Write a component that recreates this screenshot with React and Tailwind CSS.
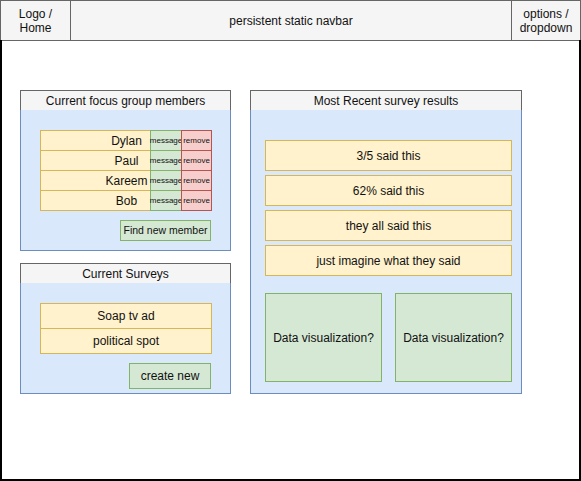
import React from 'react';

const MEMBERS = ['Dylan', 'Paul', 'Kareem', 'Bob'];
const SURVEYS = ['Soap tv ad', 'political spot'];
const RESULTS = ['3/5 said this', '62% said this', 'they all said this', 'just imagine what they said'];

function PanelHeader({ title }) {
    return (
        <div className="h-[21px] border border-[#666666] bg-[#f5f5f5] flex items-center justify-center text-[12px] leading-none">
            {title}
        </div>
    );
}

function Navbar() {
    return (
        <div className="flex h-[41px] border border-[#666666] bg-[#f5f5f5] text-[12px] leading-[14px] text-[#111]">
            <div className="w-[70px] flex items-center justify-center text-center border-r border-[#666666]">
                Logo /<br />Home
            </div>
            <div className="flex-1 flex items-center justify-center">persistent static navbar</div>
            <div className="w-[69px] flex items-center justify-center text-center border-l border-[#666666]">
                options /<br />dropdown
            </div>
        </div>
    );
}

function MembersPanel() {
    return (
        <div className="w-[211px]">
            <PanelHeader title="Current focus group members" />
            <div className="h-[141px] -mt-px border-x border-b border-[#6c8ebf] bg-[#dae8fc] pl-[19px] pt-[20px]">
                <div className="flex flex-col">
                    {MEMBERS.map((name, i) => (
                        <div key={name} className={`flex h-[21px] ${i > 0 ? '-mt-px' : ''}`}>
                            <div className="w-[111px] border border-[#d6b656] bg-[#fff2cc] flex items-center justify-center pl-[62px] text-[12px] whitespace-nowrap">
                                {name}
                            </div>
                            <div className="w-[32px] -ml-px border border-[#82b366] bg-[#d5e8d4] flex items-center justify-center text-[8px] whitespace-nowrap overflow-visible">
                                message
                            </div>
                            <div className="w-[31px] -ml-px border border-[#b85450] bg-[#f8cecc] flex items-center justify-center text-[8px] whitespace-nowrap">
                                remove
                            </div>
                        </div>
                    ))}
                </div>
                <div className="flex justify-end pr-[19px] mt-[9px]">
                    <div className="w-[91px] h-[21px] border border-[#82b366] bg-[#d5e8d4] flex items-center justify-center text-[10.5px]">
                        Find new member
                    </div>
                </div>
            </div>
        </div>
    );
}

function SurveysPanel() {
    return (
        <div className="w-[211px] mt-[12px]">
            <PanelHeader title="Current Surveys" />
            <div className="h-[111px] -mt-px border-x border-b border-[#6c8ebf] bg-[#dae8fc] pl-[19px] pt-[20px]">
                {SURVEYS.map((s, i) => (
                    <div
                        key={s}
                        className={`w-[172px] h-[26px] border border-[#d6b656] bg-[#fff2cc] flex items-center justify-center text-[12px] ${i > 0 ? '-mt-px' : ''}`}
                    >
                        {s}
                    </div>
                ))}
                <div className="flex justify-end pr-[19px] mt-[9px]">
                    <div className="w-[82px] h-[26px] border border-[#82b366] bg-[#d5e8d4] flex items-center justify-center text-[12px]">
                        create new
                    </div>
                </div>
            </div>
        </div>
    );
}

function ResultsPanel() {
    return (
        <div className="w-[272px] ml-[19px]">
            <PanelHeader title="Most Recent survey results" />
            <div className="h-[284px] -mt-px border-x border-b border-[#6c8ebf] bg-[#dae8fc] pl-[14px] pt-[30px] flex flex-col">
                <div className="flex flex-col gap-[4px]">
                    {RESULTS.map(r => (
                        <div key={r} className="w-[247px] h-[31px] border border-[#d6b656] bg-[#fff2cc] flex items-center justify-center text-[12px]">
                            {r}
                        </div>
                    ))}
                </div>
                <div className="flex gap-[13px] mt-[17px]">
                    <div className="w-[117px] h-[89px] border border-[#82b366] bg-[#d5e8d4] flex items-center justify-center text-[12px]">
                        Data visualization?
                    </div>
                    <div className="w-[117px] h-[89px] border border-[#82b366] bg-[#d5e8d4] flex items-center justify-center text-[12px]">
                        Data visualization?
                    </div>
                </div>
            </div>
        </div>
    );
}

export default function App() {
    return (
        <div
            className="w-[581px] h-[481px] bg-white text-[#111] flex flex-col"
            style={{ fontFamily: '"Liberation Sans", Arial, sans-serif' }}
        >
            <Navbar />
            <div className="flex-1 -mt-px border-x-2 border-b-2 border-black pl-[18px] pt-[50px] flex items-start">
                <div className="flex flex-col">
                    <MembersPanel />
                    <SurveysPanel />
                </div>
                <ResultsPanel />
            </div>
        </div>
    );
}
